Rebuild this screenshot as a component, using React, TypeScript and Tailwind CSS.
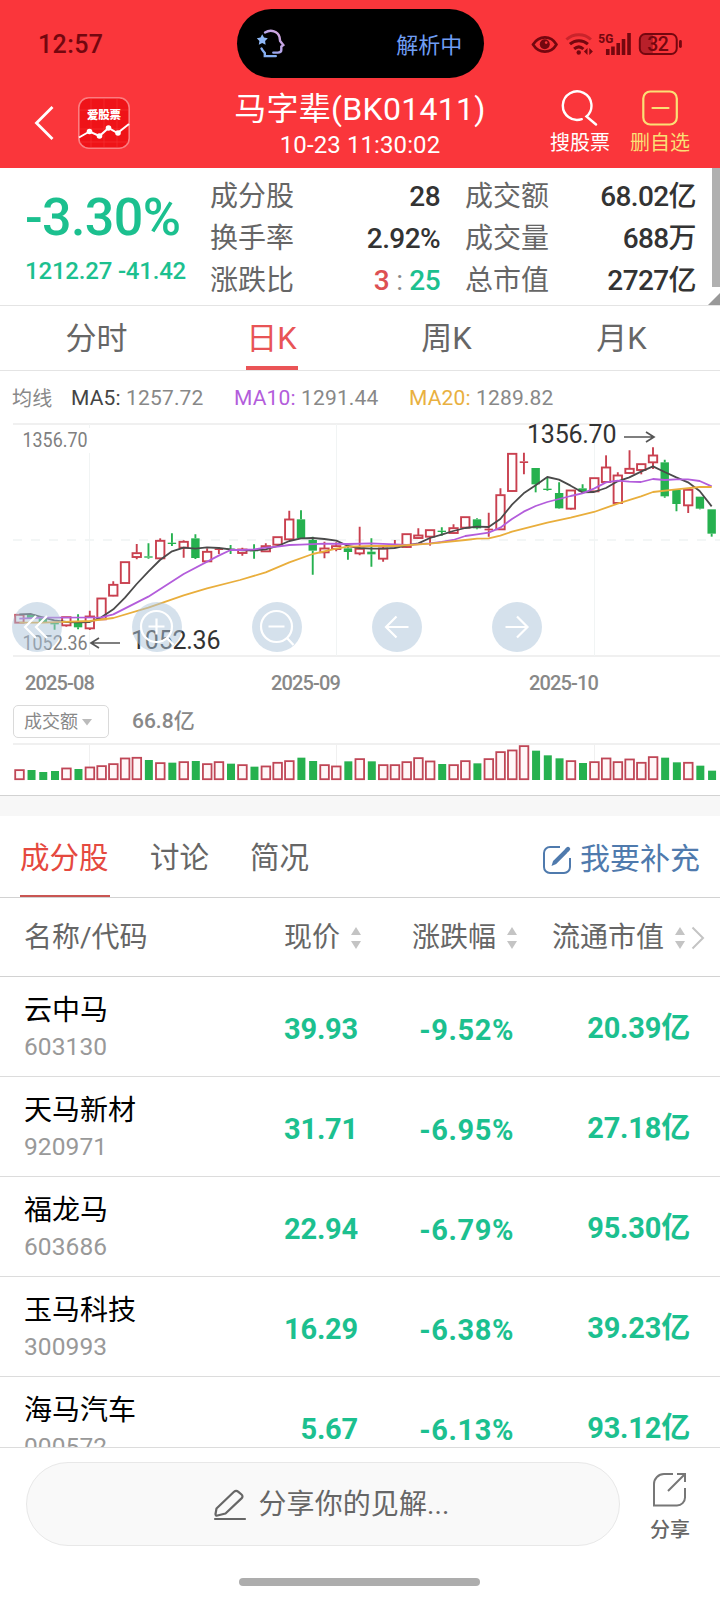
import type { ReactNode } from "react";

// one candle: [up, high, body top, body bottom, low, volume top], in thirds of a pixel
type Candle = [number, number, number, number, number, number];

const candles: Candle[] = [
  [1, 583, 583, 608, 608, 343],
  [0, 581, 583, 594, 597, 345],
  [0, 590, 592, 606, 608, 351],
  [0, 608, 609, 613, 629, 348],
  [1, 590, 590, 616, 620, 338],
  [0, 583, 605, 622, 628, 342],
  [1, 572, 588, 625, 630, 335],
  [1, 534, 534, 598, 598, 331],
  [1, 484, 493, 527, 529, 325],
  [1, 425, 425, 489, 489, 308],
  [1, 372, 398, 411, 418, 306],
  [0, 370, 409, 413, 416, 315],
  [1, 355, 361, 415, 415, 322],
  [0, 340, 368, 372, 378, 323],
  [1, 361, 364, 383, 413, 319],
  [0, 343, 355, 414, 417, 318],
  [1, 385, 394, 424, 424, 325],
  [1, 381, 386, 390, 402, 319],
  [0, 375, 386, 389, 402, 326],
  [1, 383, 387, 399, 407, 328],
  [0, 373, 390, 394, 416, 335],
  [1, 370, 377, 394, 396, 332],
  [1, 350, 350, 374, 374, 321],
  [1, 272, 297, 358, 360, 316],
  [0, 271, 298, 355, 357, 308],
  [0, 350, 360, 392, 464, 318],
  [1, 365, 384, 397, 415, 328],
  [1, 367, 377, 387, 394, 332],
  [0, 378, 385, 396, 419, 319],
  [1, 320, 385, 400, 406, 310],
  [0, 355, 395, 403, 440, 319],
  [1, 378, 384, 416, 425, 328],
  [1, 360, 376, 380, 382, 328],
  [1, 341, 341, 381, 384, 319],
  [1, 325, 345, 354, 356, 307],
  [1, 329, 329, 350, 377, 317],
  [0, 322, 332, 336, 347, 327],
  [1, 313, 323, 339, 341, 328],
  [1, 290, 290, 323, 323, 316],
  [0, 295, 298, 325, 328, 325],
  [1, 278, 326, 331, 350, 310],
  [1, 205, 224, 328, 330, 289],
  [1, 100, 100, 213, 214, 284],
  [1, 98, 124, 129, 163, 271],
  [0, 144, 144, 193, 217, 287],
  [0, 172, 206, 210, 212, 301],
  [0, 187, 219, 265, 266, 310],
  [1, 210, 210, 266, 269, 316],
  [0, 193, 205, 215, 217, 324],
  [1, 173, 173, 214, 214, 319],
  [1, 106, 141, 186, 186, 308],
  [1, 157, 165, 249, 250, 319],
  [1, 91, 145, 159, 162, 311],
  [1, 131, 131, 150, 163, 321],
  [1, 82, 105, 127, 147, 304],
  [0, 119, 127, 229, 233, 308],
  [0, 207, 209, 252, 274, 322],
  [1, 208, 208, 256, 279, 321],
  [0, 230, 230, 266, 268, 332],
  [0, 268, 268, 341, 350, 347],
];

const ma5 =
  "58,583 93,582 128,592 163,601 199,606 234,607 269,606 304,592 340,568 375,533 410,492 445,455 480,420 516,394 551,383 586,386 621,382 656,384 692,388 727,391 762,391 797,388 833,378 868,363 903,355 938,354 973,357 1009,362 1044,378 1079,384 1114,386 1149,386 1184,384 1220,376 1255,370 1290,354 1325,344 1360,333 1396,324 1431,320 1466,321 1501,297 1536,254 1571,220 1607,196 1642,171 1677,179 1712,197 1747,217 1782,216 1818,204 1853,184 1888,172 1923,155 1959,139 1994,156 2029,172 2064,187 2099,213 2135,259";
const ma10 =
  "58,596 128,593 304,592 340,583 445,530 551,462 656,407 692,390 727,390 762,388 797,383 833,380 868,375 903,374 973,371 1044,372 1114,370 1184,373 1220,375 1290,370 1325,366 1360,360 1396,348 1431,343 1466,338 1501,323 1536,297 1571,275 1607,258 1642,246 1712,228 1747,220 1782,206 1818,187 1853,182 1888,185 1923,186 1959,177 1994,180 2029,178 2064,178 2099,183 2135,199";
const ma20 =
  "58,608 128,608 269,603 340,594 445,563 551,526 621,505 720,480 797,457 868,427 938,402 1009,386 1044,380 1114,378 1184,378 1290,371 1396,360 1431,356 1466,355 1501,347 1536,335 1642,308 1712,293 1782,276 1853,251 1923,229 1959,216 2029,208 2099,201 2135,201";

const UP = "#c9404f";
const DOWN = "#26b14f";
const gridX = [89.5, 336.5, 594.5];
const candleX = (i: number) => (58.2 + 35.2 * i) / 3;

const stocks = [
  { name: "云中马", code: "603130", price: "39.93", change: "-9.52%", cap: "20.39亿" },
  { name: "天马新材", code: "920971", price: "31.71", change: "-6.95%", cap: "27.18亿" },
  { name: "福龙马", code: "603686", price: "22.94", change: "-6.79%", cap: "95.30亿" },
  { name: "玉马科技", code: "300993", price: "16.29", change: "-6.38%", cap: "39.23亿" },
  { name: "海马汽车", code: "000572", price: "5.67", change: "-6.13%", cap: "93.12亿" },
];

function StatusBar() {
  return (
    <div className="flex h-[87px] items-start pl-[38px] pr-[35px] text-[#74070f]">
      <span className="mt-[27px] w-[199px] text-[25px] leading-9 font-medium tracking-[0.4px]">12:57</span>
      <div className="mt-[9px] flex h-[69px] w-[248px] items-center justify-between rounded-full bg-black pl-[19px] pr-[22px]">
        <svg width="30" height="32" viewBox="0 0 30 32" fill="none" strokeWidth="2.4" strokeLinecap="round">
          <defs>
            <linearGradient id="head" x1="0" y1="1" x2="1" y2="0">
              <stop offset="0" stopColor="#76a8f2" />
              <stop offset="0.5" stopColor="#b9a5e8" />
              <stop offset="1" stopColor="#e0a6d8" />
            </linearGradient>
          </defs>
          <path d="M9 4.5c6-3.600 13-1 14.500 4.500l.6 4 3.200 4-2 1.500v3.500c0 2-1.500 2.600-3.500 2.600h-4.500" stroke="url(#head)" />
          <path d="M5.500 20.500c1 2 2.300 3.400 3.300 4.600v3h11" stroke="#86aef0" />
          <path d="m6.200 6.200 1.800 3.300 3.800.7-2.700 2.700.5 3.800-3.400-1.700-3.400 1.700.6-3.800L.8 10.200l3.700-.7z" fill="#8fb8f6" />
        </svg>
        <span className="mt-[3px] text-[22px] text-[#6f9df3]">解析中</span>
      </div>
      <svg className="mt-[30px] ml-[47px]" width="154" height="30" viewBox="532 30 154 30" fill="none">
        <path d="M534 44.500c6-9.500 18-9.500 23.500 0-5.500 9.500-17.500 9.500-23.500 0z" stroke="#74070f" strokeWidth="2.600" />
        <circle cx="545.800" cy="44.300" r="5" fill="#74070f" />
        <circle cx="547.200" cy="42.600" r="1.300" fill="#fa363b" />
        <path d="M567.500 39.500c7-6.500 18-6.500 24.500 0" stroke="#c9242b" strokeWidth="3" />
        <path d="M571 44.200c5-4.600 13-4.600 18 0M575.200 49c3-2.600 6.500-2.600 9.300 0" stroke="#74070f" strokeWidth="3" />
        <circle cx="579.800" cy="52.500" r="2.200" fill="#74070f" />
        <path d="M588.600 48v7l-3.600-3.500zM590.400 48v7l3.600-3.500z" fill="#74070f" />
        <text x="599.500" y="43.300" fontSize="13.500" fontWeight="800" textLength="15" lengthAdjust="spacingAndGlyphs" fill="#74070f">5G</text>
        <path d="M608.900 49v6M614.100 46.500v8.500M619.400 43v12M624.700 39v16M630.200 33v22" stroke="#74070f" strokeWidth="3.600" />
        <path d="M647 34h7v20h-7a6 6 0 0 1-6-6v-8a6 6 0 0 1 6-6z" fill="#b8202a" />
        <rect x="641" y="34" width="37" height="20" rx="5.500" stroke="#74070f" strokeWidth="2" />
        <rect x="680.300" y="40" width="2.800" height="8" rx="1.400" fill="#74070f" />
        <text x="648.500" y="51" fontSize="19.500" fontWeight="500" textLength="21.500" fill="#74070f">32</text>
      </svg>
    </div>
  );
}

function NavBar() {
  return (
    <div className="flex h-[81px] items-start text-white">
      <svg className="mt-[17px] ml-[32px]" width="26" height="38" viewBox="0 0 26 38" fill="none" stroke="#fff" strokeWidth="2.800">
        <path d="M20.500 3 4.500 19l16 16" />
      </svg>
      {/* app logo */}
      <svg className="mt-[10px] ml-[20px]" width="52" height="52" viewBox="0 0 52 52">
        <rect x="0.800" y="0.800" width="50.400" height="50.400" rx="10" fill="#ef1318" stroke="#fb7d80" strokeWidth="1.600" />
        <path d="M13 2v48M26 2v48M39 2v48M2 13h48M2 32h48M2 45h48" stroke="#f53337" strokeWidth="0.600" />
        <text x="9" y="21.500" fontSize="11.500" fontWeight="900" textLength="34" fill="#fff">爱股票</text>
        <path d="m1 40.500 10.500-6 10 4.500 9-8 9 5L51 27" fill="none" stroke="#fff" strokeWidth="2" />
        <g fill="#fff">
          <circle cx="11.500" cy="34.500" r="2.800" />
          <circle cx="21.500" cy="39" r="2.800" />
          <circle cx="30.500" cy="31" r="2.800" />
          <circle cx="40" cy="36" r="2.800" />
        </g>
      </svg>
      <div className="flex w-[460px] flex-col items-center">
        <h1 className="mt-px text-[32px] leading-[42px] tracking-[0.3px]">马字辈(BK01411)</h1>
        <p className="-mt-px text-[24px] leading-[32px] tracking-[0.1px]">10-23 11:30:02</p>
      </div>
      <div className="-ml-[40px] flex w-[60px] flex-col items-center">
        <svg className="mt-[3px]" width="38" height="36" viewBox="0 0 38 36" fill="none" stroke="#fff" strokeWidth="2.400" strokeLinecap="round">
          <path d="M20.800 29.200a14.300 14.300 0 1 1 4.700-2.700l9.500 8" />
        </svg>
        <span className="mt-[4px] text-[20px] leading-[26px]">搜股票</span>
      </div>
      <div className="ml-[20px] flex w-[60px] flex-col items-center text-[#fbdf76]">
        <svg className="mt-[3px]" width="38" height="36" viewBox="0 0 38 36" fill="none" stroke="currentColor" strokeWidth="2.200">
          <rect x="2.300" y="1.500" width="33.500" height="33" rx="7" />
          <path d="M11.500 18h16" strokeLinecap="round" />
        </svg>
        <span className="mt-[4px] text-[20px] leading-[26px]">删自选</span>
      </div>
    </div>
  );
}

function Stat({ label, children }: { label: string; children: ReactNode }) {
  return (
    <div className="flex h-[42px] items-center justify-between">
      <span className="text-[#666]">{label}</span>
      <span className="font-medium tracking-[-0.6px] text-[#333]">{children}</span>
    </div>
  );
}

function Quote() {
  return (
    <section className="relative flex h-[138px] border-b border-[#e4e4e4] text-[28px]">
      <div className="w-[210px] pl-[25px] text-[#1cc08f]">
        <div className="mt-[20px] text-[52px] leading-[60px] font-medium tracking-[-0.6px] whitespace-nowrap">-3.30%</div>
        <div className="mt-[7px] text-[24px] leading-[32px] font-medium tracking-[-0.2px] whitespace-nowrap">1212.27 -41.42</div>
      </div>
      <div className="w-[230px] pt-[8px]">
        <Stat label="成分股">28</Stat>
        <Stat label="换手率">2.92%</Stat>
        <Stat label="涨跌比">
          <span className="text-[#dd5053]">3</span>
          <span className="mx-[7px] font-normal text-[#888]">:</span>
          <span className="text-[#1cc08f]">25</span>
        </Stat>
      </div>
      <div className="ml-[25px] w-[231px] pt-[8px]">
        <Stat label="成交额">68.02亿</Stat>
        <Stat label="成交量">688万</Stat>
        <Stat label="总市值">2727亿</Stat>
      </div>
      <div className="absolute top-0 right-0 h-[119px] w-[8px] bg-[#b0b0b0]" />
      <svg className="absolute right-0 bottom-0" width="12" height="12" viewBox="0 0 12 12">
        <path d="M12 0v12H0z" fill="#999" />
      </svg>
    </section>
  );
}

function PeriodTabs() {
  return (
    <div className="flex h-[65px] border-b border-[#e4e4e4] pl-[9px] pr-[11px] text-[31px] text-[#666]">
      {["分时", "日K", "周K", "月K"].map((tab) => (
        <div key={tab} className="flex flex-1 flex-col items-center justify-between">
          <span className={`mt-[8px] leading-[50px] ${tab === "日K" ? "text-[#e85456]" : ""}`}>{tab}</span>
          {tab === "日K" && <div className="h-[4px] w-[52px] bg-[#ea5456]" />}
        </div>
      ))}
    </div>
  );
}

function ToolButton({ children }: { children: ReactNode }) {
  return (
    <button className="flex h-[50px] w-[50px] items-center justify-center rounded-full bg-[#abc3d9]/50">
      <svg width="50" height="50" viewBox="0 0 50 50" fill="none" stroke="#fff" strokeWidth="2.200">
        {children}
      </svg>
    </button>
  );
}

function KLine() {
  return (
    <section>
      <div className="flex h-[52px] items-center pt-[3px] pl-[12px] text-[21px] tracking-[0.15px] text-[#888]">
        <span className="w-[59px] text-[20px]">均线</span>
        <span className="w-[163px]"><span className="text-[#444]">MA5:</span> 1257.72</span>
        <span className="w-[175px]"><span className="text-[#b35ddb]">MA10:</span> 1291.44</span>
        <span><span className="text-[#e9b040]">MA20:</span> 1289.82</span>
      </div>
      <div className="relative">
        <svg className="block overflow-visible" width="720" height="234" viewBox="0 423 720 234">
          <path d="M13 424h707M13 656h707" stroke="#f0f0f0" strokeWidth="2" />
          <path d="M13 540h707" stroke="#f0f4f4" strokeWidth="1.500" strokeDasharray="9 9" />
          {gridX.map((x) => (
            <path key={x} d={`M${x} 424v232`} stroke="#f1f4f4" />
          ))}
          <g fontSize="20" fill="#808080">
            <rect x="20" y="428" width="70" height="25" fill="#fff" />
            <text x="22.500" y="447" textLength="65" lengthAdjust="spacingAndGlyphs">1356.70</text>
            <text x="22.500" y="650" textLength="65" lengthAdjust="spacingAndGlyphs">1052.36</text>
          </g>
          <g transform="translate(0 420)" strokeWidth="1.900">
            {candles.map(([up, high, top, bottom, low], i) => {
              const x = candleX(i);
              const color = up ? UP : DOWN;
              const solid = !up || bottom - top < 8;
              return (
                <g key={i} stroke={color}>
                  <path d={`M${x} ${high / 3}V${top / 3}M${x} ${bottom / 3}V${low / 3}`} />
                  {solid ? (
                    <rect x={x - 4.200} y={top / 3} width="8.400" height={(bottom - top) / 3} fill={color} stroke="none" />
                  ) : (
                    <rect x={x - 4.200} y={top / 3 + 0.500} width="8.400" height={(bottom - top) / 3 - 0.500} fill="#fff" />
                  )}
                </g>
              );
            })}
          </g>
          <g transform="translate(0 420) scale(0.33333)" fill="none" strokeWidth="5.400" strokeLinejoin="round">
            <polyline points={ma5} stroke="#4a4a4a" />
            <polyline points={ma10} stroke="#b35ddb" />
            <polyline points={ma20} stroke="#e9ae3c" />
          </g>
          <g fontSize="25" fill="#333">
            <text x="527" y="443" textLength="89.500">1356.70</text>
            <text x="131" y="649" textLength="89.500">1052.36</text>
          </g>
          <g fill="none" stroke="#555" strokeWidth="1.700">
            <path d="M624 437h29M646 432l8 5-8 5" />
            <path d="M120 643H92M99 638l-8 5 8 5" />
          </g>
        </svg>
        <div className="absolute top-[179px] left-[12px] flex gap-[70px]">
          <ToolButton>
            <path d="M24 14 13 25l11 11M35 14 24 25l11 11" />
          </ToolButton>
          <ToolButton>
            <circle cx="24.500" cy="24.500" r="15.500" />
            <path d="M16.500 24.500h16M24.500 16.500v16M35 36l6.500 7" />
          </ToolButton>
          <ToolButton>
            <circle cx="24.500" cy="24.500" r="15.500" />
            <path d="M16.500 24.500h16M35 36l6.500 7" />
          </ToolButton>
          <ToolButton>
            <path d="M36.500 25H14M24.500 14.500 14 25l10.500 10.500" />
          </ToolButton>
          <ToolButton>
            <path d="M13.500 25H36M25 14.500 35.500 25 25 35.500" />
          </ToolButton>
        </div>
      </div>
      <div className="flex h-[48px] items-center pt-[3px] pl-[25px] text-[20px] font-medium tracking-[-0.85px] text-[#888]">
        <span className="w-[246px]">2025-08</span>
        <span className="w-[258px]">2025-09</span>
        <span>2025-10</span>
      </div>
      <div className="flex h-[38px] items-start pl-[13px] text-[#888]">
        <div className="flex h-[33px] w-[96px] items-center rounded-[5px] border-[1.500px] border-[#dadada] pl-[10px] text-[18px]">
          成交额
          <svg className="mt-[2px] ml-[4px]" width="10" height="7" viewBox="0 0 10 7">
            <path d="M0 0h10L5 6.500z" fill="#bbb" />
          </svg>
        </div>
        <span className="mt-[1px] ml-[23px] text-[21px] leading-[31px] font-medium">66.8亿</span>
      </div>
      <svg className="block" width="720" height="52" viewBox="0 743 720 52">
        <path d="M13 744h707" stroke="#f0f0f0" strokeWidth="2" />
        {gridX.map((x) => (
          <path key={x} d={`M${x} 744v36`} stroke="#f0f0f0" />
        ))}
        {candles.map((c, i) => {
          const x = candleX(i);
          const y = 655 + c[5] / 3;
          return c[0] ? (
            <rect key={i} x={x - 4.200} y={y + 0.800} width="8.600" height={780 - y - 1.600} fill="#fff7f8" stroke="#bf4656" strokeWidth="1.800" />
          ) : (
            <rect key={i} x={x - 3.600} y={y} width="8" height={780 - y} fill={DOWN} />
          );
        })}
      </svg>
    </section>
  );
}

function SortArrows() {
  return (
    <svg width="10" height="22" viewBox="0 0 10 22" fill="#c4c4c4">
      <path d="M5 0l5 8H0zM0 14h10l-5 8z" />
    </svg>
  );
}

function StockTable() {
  return (
    <section className="h-[631px] overflow-hidden">
      <div className="flex h-[82px] items-center border-b border-[#d2d2d2] pl-[20px] text-[29.500px] text-[#666]">
        <div className="flex h-full w-[90px] flex-col justify-between text-[#e5493f]">
          <span className="mt-[18px] leading-[48px] whitespace-nowrap">成分股</span>
          <div className="h-[2px] bg-[#c95552]" />
        </div>
        <span className="mt-[3px] ml-[40px]">讨论</span>
        <span className="mt-[3px] ml-[41px]">简况</span>
        <div className="mt-[3px] ml-auto flex items-center pr-[20px] text-[30px] text-[#4f7aad]">
          <svg className="mt-[3px] mr-[8px]" width="30" height="30" viewBox="0 0 30 30" fill="none" stroke="currentColor" strokeWidth="2">
            <path d="M18 2H8a6 6 0 0 0-6 6v14a6 6 0 0 0 6 6h14a6 6 0 0 0 6-6V13" />
            <path d="m9.500 21 1.600-5L22.200 5l3 3-11 11z" fill="currentColor" stroke="none" />
            <path d="m24.300 5.700 1.700-1.700" strokeWidth="4.400" strokeLinecap="round" />
          </svg>
          我要补充
        </div>
      </div>
      <div className="flex h-[79px] items-center border-b border-[#d2d2d2] pt-[2px] pl-[24px] text-[28px] text-[#666]">
        <span className="w-[260px]">名称/代码</span>
        <span className="mr-[11px]">现价</span>
        <SortArrows />
        <span className="mr-[11px] ml-[51px]">涨跌幅</span>
        <SortArrows />
        <span className="mr-[11px] ml-[35px]">流通市值</span>
        <SortArrows />
        <svg className="ml-[6px]" width="14" height="24" viewBox="0 0 14 24" fill="none" stroke="#c4c4c4" strokeWidth="2">
          <path d="m1.500 1.500 10.500 10.500L1.500 22.500" />
        </svg>
      </div>
      {stocks.map((s) => (
        <div
          key={s.code}
          className="flex h-[100px] items-center border-b border-[#dcdcdc] pl-[24px] text-right text-[29px] font-bold text-[#1cc08f]"
        >
          <div className="mt-[2px] w-[160px] text-left font-normal">
            <div className="text-[28px] leading-[38px] text-black">{s.name}</div>
            <div className="mt-[1px] text-[24.500px] leading-[32px] tracking-[0.1px] text-[#999]">{s.code}</div>
          </div>
          <span className="mt-[6px] w-[174px] tracking-[-0.2px]">{s.price}</span>
          <span className="mt-[9px] w-[156px] tracking-[0.6px]">{s.change}</span>
          <span className="mt-[4px] w-[176px] tracking-[-0.2px]">{s.cap}</span>
        </div>
      ))}
    </section>
  );
}

function Footer() {
  return (
    <footer className="h-[157px] border-t border-[#dcdcdc] bg-white">
      <div className="flex pt-[14px] pl-[26px] text-[#666]">
        <div className="flex h-[84px] w-[594px] items-center justify-center rounded-full border border-[#e8e8e8] bg-[#f9f9f9] pt-[2px] pl-[17px] text-[28px]">
          <svg className="mr-[11px]" width="34" height="34" viewBox="0 0 34 34" fill="none" stroke="#666" strokeWidth="2.200" strokeLinecap="round" strokeLinejoin="round">
            <path d="M3.500 20.500 21 3.800c1.500-1.400 3-1.200 4.400 0l3.100 2.700c1.300 1.200 1.300 2.600 0 3.900L12.500 25.500l-8 2c-1.500.3-2-.3-2-1.500z" />
            <path d="M2 31h30" />
          </svg>
          <span className="tracking-[0.1px]">分享你的见解...</span>
        </div>
        <div className="ml-[30px] flex w-[40px] flex-col items-center">
          <svg className="mt-[10px]" width="36" height="36" viewBox="0 0 36 36" fill="none" stroke="#777" strokeWidth="2">
            <path d="M21 2H12A10 10 0 0 0 2 12v21.500h23a8 8 0 0 0 8-8V16" />
            <path d="M25 2h8v8M33 2 16 19" />
          </svg>
          <span className="mt-[9px] text-[20px] leading-[26px] font-medium">分享</span>
        </div>
      </div>
      <div className="mt-[32px] ml-[239px] h-[8px] w-[241px] rounded-full bg-[#adadad]" />
    </footer>
  );
}

export default function App() {
  return (
    <div className="h-[1604px] w-[720px] overflow-hidden bg-white font-['Roboto','Noto_Sans_CJK_SC',sans-serif]">
      <header className="h-[168px] bg-[#fa363b]">
        <StatusBar />
        <NavBar />
      </header>
      <Quote />
      <PeriodTabs />
      <KLine />
      <div className="h-[21px] border-t border-[#d2d2d2] bg-[#f7f7f7]" />
      <StockTable />
      <Footer />
    </div>
  );
}
